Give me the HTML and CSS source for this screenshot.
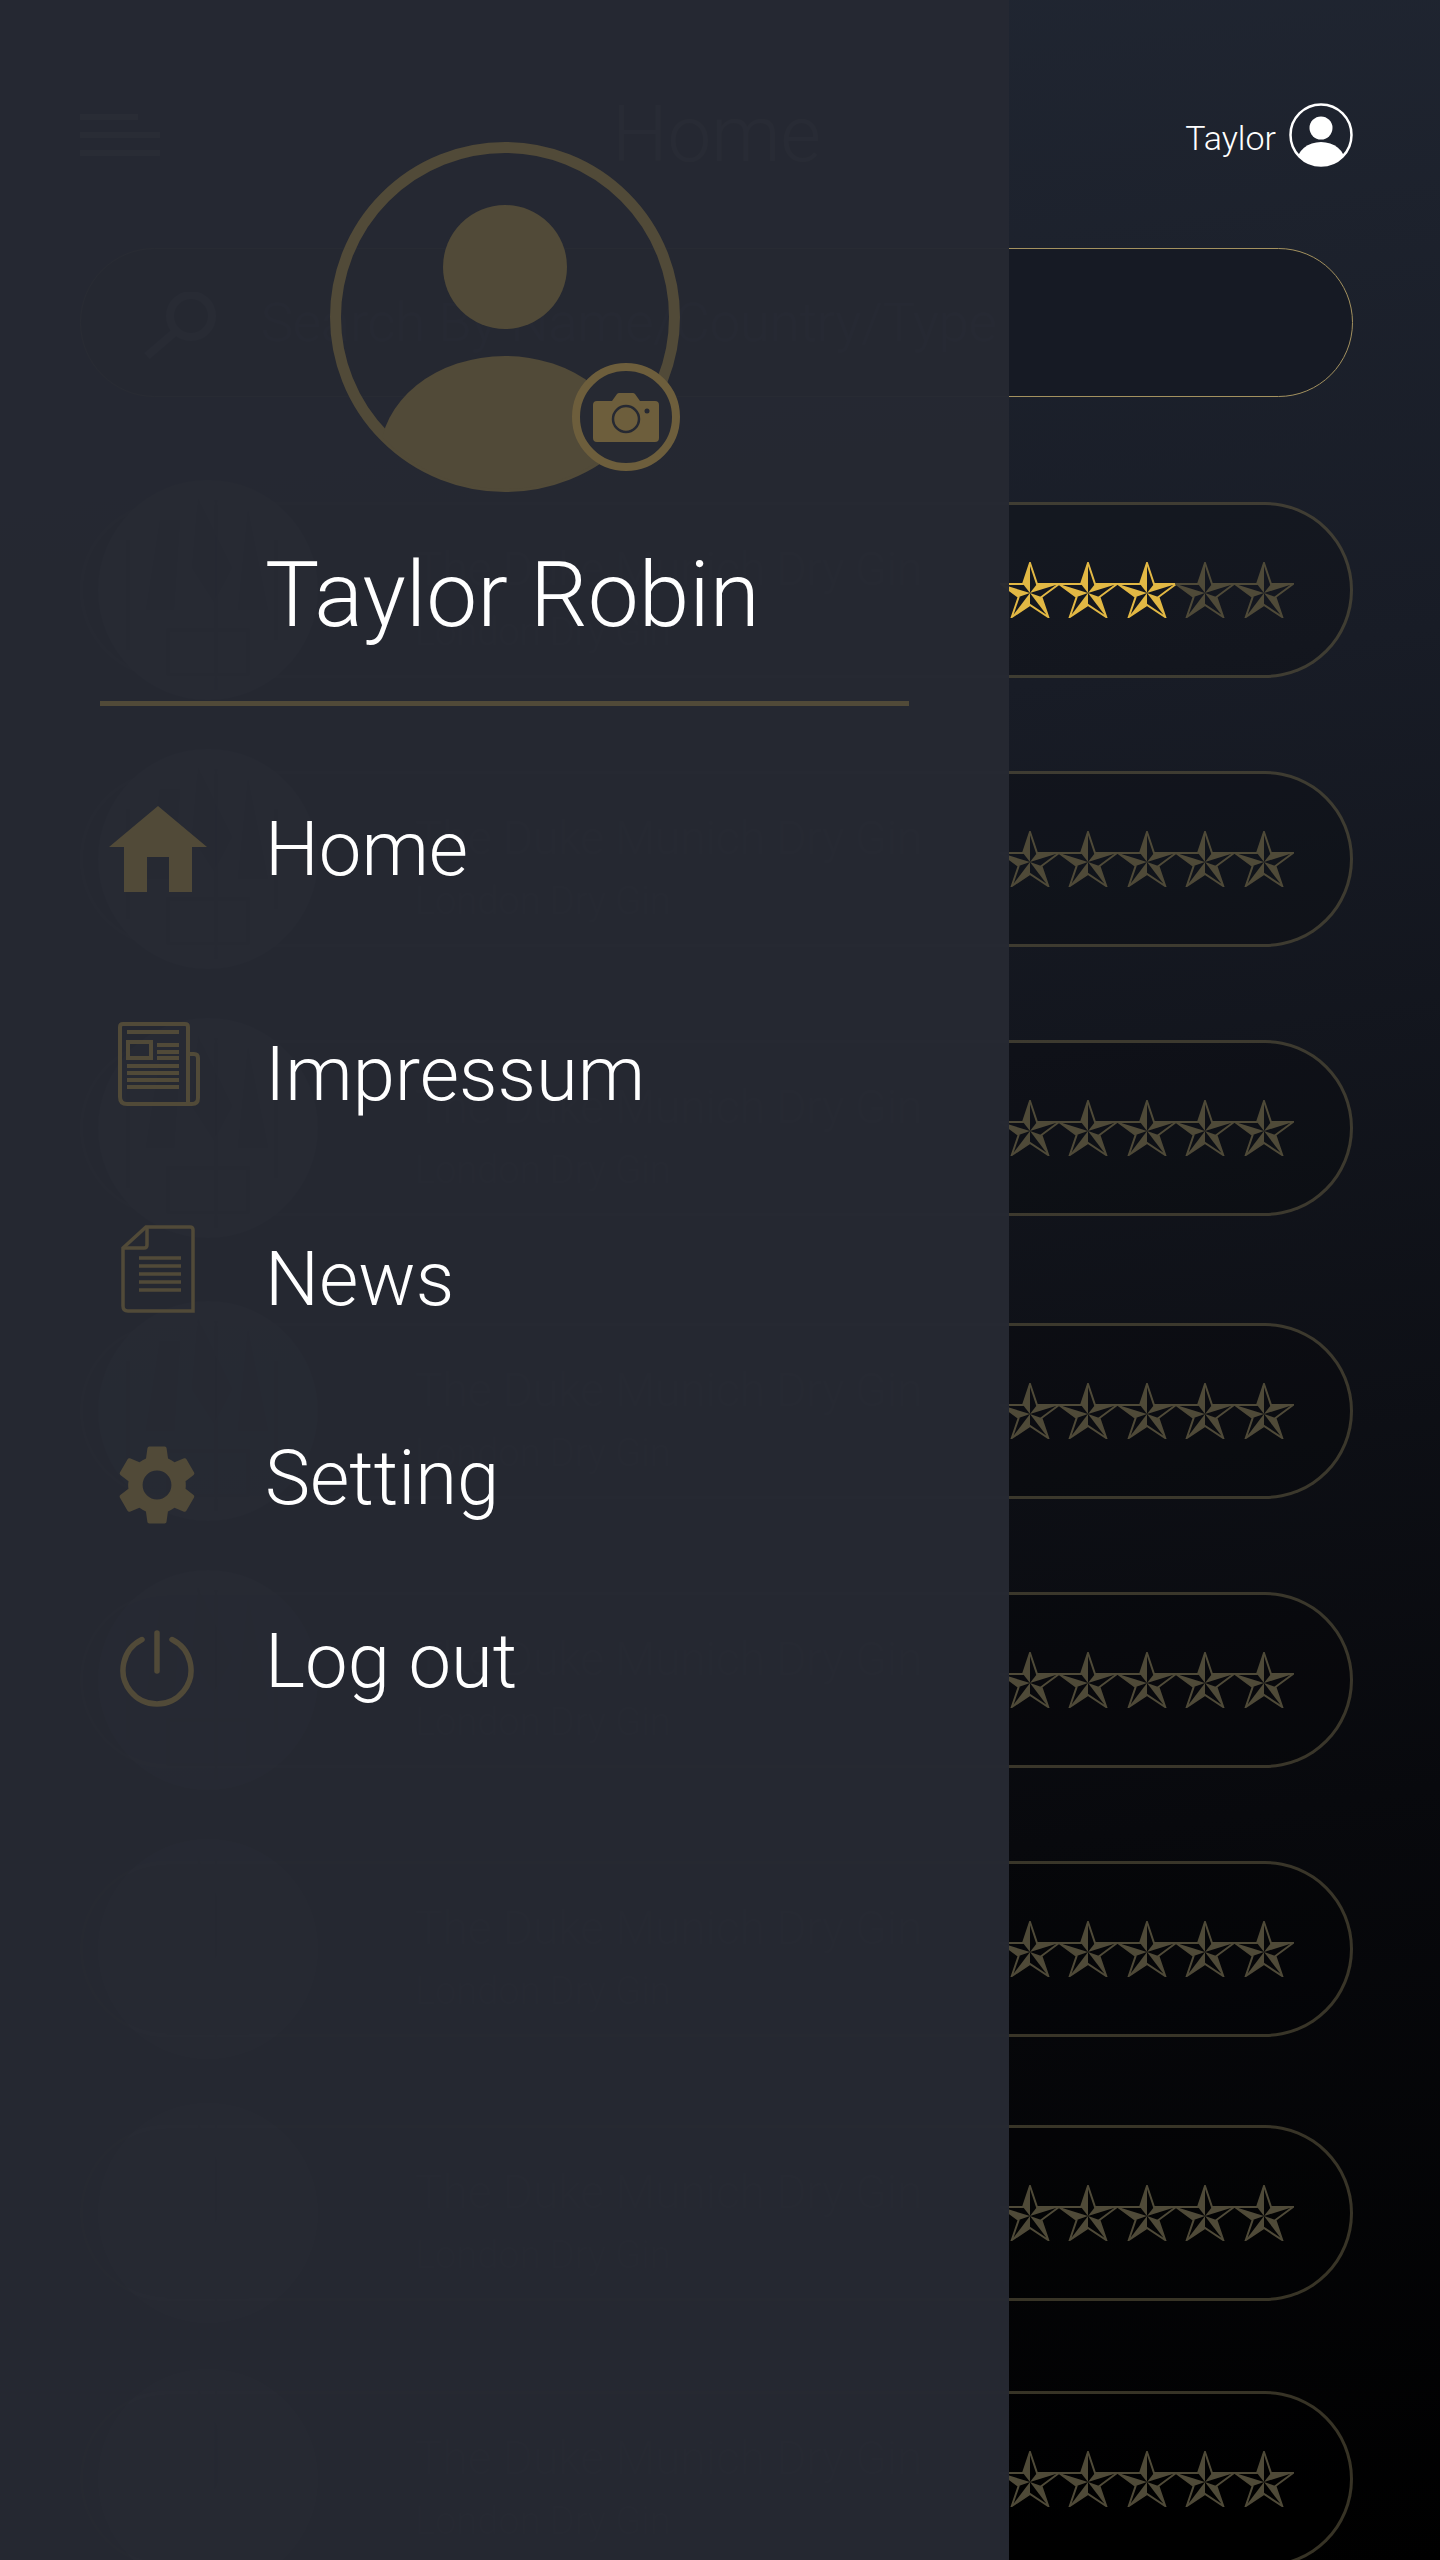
FILE: index.html
```html
<!DOCTYPE html>
<html lang="en">
<head>
    <meta charset="UTF-8">
    <title>Home</title>
    <link rel="stylesheet" href="styles.css">
</head>
<body>
<svg class="defs" width="0" height="0">
    <symbol id="star" viewBox="0 0 60 56">
        <polygon class="star_line" points="30,1 37,22 59,22 41.4,35 48.2,55 30,43 11.8,55 18.6,35 1,22 23,22"/>
        <polygon points="30,31 30,1 23,22"/>
        <polygon points="30,31 59,22 37,22"/>
        <polygon points="30,31 48.2,55 41.4,35"/>
        <polygon points="30,31 11.8,55 30,43"/>
        <polygon points="30,31 1,22 18.6,35"/>
    </symbol>
    <symbol id="portrait" viewBox="0 0 220 220">
        <circle cx="110" cy="110" r="110" fill="#fff" opacity=".3"/>
        <path d="M62 40h20l-6 90H48zM100 18l34 70-18 34-22-34zM150 30l20 100h-30z" fill="#000" opacity=".35"/>
        <path d="M30 60v110M118 20v190M178 60v100M70 150h80v45H70z" fill="none" stroke="#000" stroke-width="3" opacity=".3"/>
    </symbol>
</svg>

<div id="page">
    <div id="topbar">
        <div class="burger"><i class="short"></i><i></i><i></i></div>
        <h1>Home</h1>
        <div class="user">
            <span>Taylor</span>
            <svg class="user_icon" viewBox="0 0 64 64">
                <defs><clipPath id="userClip"><circle cx="32" cy="32" r="30.5"/></clipPath></defs>
                <circle cx="32" cy="32" r="30.5" fill="none" stroke="#fff" stroke-width="2.5"/>
                <circle cx="32" cy="25" r="11.5" fill="#fff"/>
                <ellipse cx="32" cy="59" rx="24" ry="20" fill="#fff" clip-path="url(#userClip)"/>
            </svg>
        </div>
    </div>

    <div class="search">
        <svg class="search_icon" viewBox="0 0 80 70"><circle cx="50" cy="24" r="21" fill="none" stroke="#fff" stroke-width="8"/><path d="M34 40 6 64" stroke="#fff" stroke-width="8"/></svg>
        <span>Search By Name/Country/Type</span>
    </div>

    <ul id="rows">
        <li class="row">
            <svg class="portrait"><use href="#portrait"/></svg>
            <div class="row_text"><b>The Duke Munich Dry Gin</b><em>London Dry Gin</em></div>
            <div class="stars">
                <svg class="star star_on"><use href="#star"/></svg>
                <svg class="star star_on"><use href="#star"/></svg>
                <svg class="star star_on"><use href="#star"/></svg>
                <svg class="star"><use href="#star"/></svg>
                <svg class="star"><use href="#star"/></svg>
            </div>
        </li>
        <li class="row">
            <svg class="portrait"><use href="#portrait"/></svg>
            <div class="row_text"><b>The Duke Munich Dry Gin</b><em>London Dry Gin</em></div>
            <div class="stars">
                <svg class="star"><use href="#star"/></svg>
                <svg class="star"><use href="#star"/></svg>
                <svg class="star"><use href="#star"/></svg>
                <svg class="star"><use href="#star"/></svg>
                <svg class="star"><use href="#star"/></svg>
            </div>
        </li>
        <li class="row">
            <svg class="portrait"><use href="#portrait"/></svg>
            <div class="row_text"><b>The Duke Munich Dry Gin</b><em>London Dry Gin</em></div>
            <div class="stars">
                <svg class="star"><use href="#star"/></svg>
                <svg class="star"><use href="#star"/></svg>
                <svg class="star"><use href="#star"/></svg>
                <svg class="star"><use href="#star"/></svg>
                <svg class="star"><use href="#star"/></svg>
            </div>
        </li>
        <li class="row">
            <svg class="portrait"><use href="#portrait"/></svg>
            <div class="row_text"><b>The Duke Munich Dry Gin</b><em>London Dry Gin</em></div>
            <div class="stars">
                <svg class="star"><use href="#star"/></svg>
                <svg class="star"><use href="#star"/></svg>
                <svg class="star"><use href="#star"/></svg>
                <svg class="star"><use href="#star"/></svg>
                <svg class="star"><use href="#star"/></svg>
            </div>
        </li>
        <li class="row">
            <svg class="portrait"><use href="#portrait"/></svg>
            <div class="row_text"><b>The Duke Munich Dry Gin</b><em>London Dry Gin</em></div>
            <div class="stars">
                <svg class="star"><use href="#star"/></svg>
                <svg class="star"><use href="#star"/></svg>
                <svg class="star"><use href="#star"/></svg>
                <svg class="star"><use href="#star"/></svg>
                <svg class="star"><use href="#star"/></svg>
            </div>
        </li>
        <li class="row">
            <svg class="portrait"><use href="#portrait"/></svg>
            <div class="row_text"><b>The Duke Munich Dry Gin</b><em>London Dry Gin</em></div>
            <div class="stars">
                <svg class="star"><use href="#star"/></svg>
                <svg class="star"><use href="#star"/></svg>
                <svg class="star"><use href="#star"/></svg>
                <svg class="star"><use href="#star"/></svg>
                <svg class="star"><use href="#star"/></svg>
            </div>
        </li>
        <li class="row">
            <svg class="portrait"><use href="#portrait"/></svg>
            <div class="row_text"><b>The Duke Munich Dry Gin</b><em>London Dry Gin</em></div>
            <div class="stars">
                <svg class="star"><use href="#star"/></svg>
                <svg class="star"><use href="#star"/></svg>
                <svg class="star"><use href="#star"/></svg>
                <svg class="star"><use href="#star"/></svg>
                <svg class="star"><use href="#star"/></svg>
            </div>
        </li>
        <li class="row">
            <svg class="portrait"><use href="#portrait"/></svg>
            <div class="row_text"><b>The Duke Munich Dry Gin</b><em>London Dry Gin</em></div>
            <div class="stars">
                <svg class="star"><use href="#star"/></svg>
                <svg class="star"><use href="#star"/></svg>
                <svg class="star"><use href="#star"/></svg>
                <svg class="star"><use href="#star"/></svg>
                <svg class="star"><use href="#star"/></svg>
            </div>
        </li>
    </ul>
</div>

<!-- side menu, open over the list -->
<div id="drawer">
    <div class="photo">
        <svg viewBox="0 0 350 350" width="350" height="350">
            <defs><clipPath id="photoClip"><circle cx="175" cy="175" r="172"/></clipPath></defs>
            <circle cx="175" cy="175" r="169.5" fill="none" stroke="#514a38" stroke-width="11"/>
            <circle cx="175" cy="125" r="62" fill="#514a38"/>
            <ellipse cx="175" cy="314" rx="125" ry="100" fill="#514a38" clip-path="url(#photoClip)"/>
        </svg>
        <svg class="camera" viewBox="0 0 108 108" width="108" height="108">
            <circle cx="54" cy="54" r="50" fill="#262932" stroke="#6d5e3c" stroke-width="8"/>
            <path d="M25 38h15l5-7q1-1 2-1h14q1 0 2 1l5 7h15q4 0 4 4v33q0 4-4 4H25q-4 0-4-4V42q0-4 4-4z" fill="#6d5e3c"/>
            <circle cx="54" cy="56" r="13" fill="none" stroke="#262932" stroke-width="2.5"/>
            <circle cx="75" cy="48" r="2.500" fill="#262932"/>
        </svg>
    </div>
    <div class="name">Taylor Robin</div>
    <div class="line"></div>
    <ul id="menu">
        <li class="m_home">
            <svg viewBox="0 0 98 86" width="98" height="86"><path d="M49 0 98 41H83V86H60V51H38V86H15V41H0z" fill="#514a38"/></svg>
            <span>Home</span>
        </li>
        <li class="m_imp">
            <svg viewBox="0 0 82 84" width="82" height="84" fill="none" stroke="#514a38" stroke-width="4">
                <path d="M70 32h6q4 0 4 4v40q0 6-6 6H9q-7 0-7-7V5q0-3 3-3h62q3 0 3 3v77"/>
                <path d="M9 10h52M39 23h22M39 30h22M39 36h22M9 44h52M9 51h52M9 58h52M9 65h52"/>
                <rect x="10" y="20" width="23" height="16"/>
            </svg>
            <span>Impressum</span>
        </li>
        <li class="m_news">
            <svg viewBox="0 0 74 88" width="74" height="88" fill="none" stroke="#514a38" stroke-width="3.500">
                <path d="M2 23 25 2h44q3 0 3 3v81H7q-5 0-5-5z"/>
                <path d="M2 23h21q3 0 3-3V2"/>
                <path d="M18 33h42M18 41h42M18 49h42M18 57h42M18 65h42"/>
            </svg>
            <span>News</span>
        </li>
        <li class="m_set">
            <svg viewBox="0 0 24 24" width="96" height="96"><path d="M19.14 12.94c.04-.3.06-.61.06-.94s-.02-.64-.07-.94l2.03-1.58a.49.49 0 0 0 .12-.61l-1.92-3.32a.49.49 0 0 0-.59-.22l-2.39.96a7 7 0 0 0-1.62-.94l-.36-2.54a.48.48 0 0 0-.48-.41H10.08a.48.48 0 0 0-.47.41l-.36 2.54c-.59.24-1.13.57-1.62.94l-2.39-.96a.48.48 0 0 0-.59.22L2.73 8.87a.48.48 0 0 0 .12.61l2.03 1.58c-.05.3-.09.63-.09.94s.02.64.07.94l-2.03 1.58a.49.49 0 0 0-.12.61l1.92 3.32c.12.22.37.29.59.22l2.39-.96c.5.38 1.03.7 1.62.94l.36 2.54c.05.24.24.41.48.41h3.84c.24 0 .44-.17.47-.41l.36-2.54c.59-.24 1.13-.56 1.62-.94l2.39.96c.22.08.47 0 .59-.22l1.92-3.32a.48.48 0 0 0-.12-.61l-2.01-1.58zM12 15.6a3.6 3.6 0 1 1 0-7.200 3.600 3.600 0 0 1 0 7.200z" fill="#514a38"/></svg>
            <span>Setting</span>
        </li>
        <li class="m_out">
            <svg viewBox="0 0 76 78" width="76" height="78" fill="none" stroke="#514a38" stroke-width="5.500" stroke-linecap="round"><path d="M23 9.500a34 34 0 1 0 30 0"/><path d="M38 3v38"/></svg>
            <span>Log out</span>
        </li>
    </ul>
</div>
</body>
</html>
```

FILE: styles.css
```css
* {
    margin: 0;
    padding: 0;
    box-sizing: border-box;
}

html, body {
    width: 1440px;
    height: 2560px;
    overflow: hidden;
}

body {
    position: relative;
    background: #000;
    font-family: Roboto, "Liberation Sans", sans-serif;
    font-weight: 300;
    color: #ffffff;
}

ul {
    list-style: none;
}

.defs {
    position: absolute;
}

#page {
    height: 2560px;
    overflow: hidden;
    padding: 103px 87px 0 80px;
    background: linear-gradient(172deg, #212733 0%, #181c26 30%, #08090d 72%, #000000 100%);
}

#topbar {
    height: 64px;
    display: grid;
    grid-template-columns: 1fr auto 1fr;
    grid-template-rows: 64px;
    align-items: center;
}

.burger {
    width: 80px;
    display: flex;
    flex-direction: column;
    gap: 12px;
    opacity: .7;
}

.burger i {
    display: block;
    height: 6px;
    background: #ffffff;
}

.burger .short {
    width: 58px;
}

#topbar h1 {
    font-size: 78px;
    line-height: 64px;
    font-weight: 300;
    opacity: .6;
}

.user {
    display: flex;
    align-items: center;
    justify-content: flex-end;
    gap: 13px;
    font-size: 34px;
}

.user span {
    margin-top: 6px;
}

.user_icon {
    width: 64px;
    height: 64px;
}

.search {
    height: 149px;
    margin-top: 81px;
    border: 1px solid #a3915f;
    border-radius: 75px;
    background: #161a24;
    display: flex;
    align-items: center;
    gap: 40px;
    padding-left: 60px;
    font-size: 54px;
}

.search span {
    opacity: .25;
}

.search_icon {
    width: 80px;
    height: 70px;
    margin-top: 8px;
    opacity: .5;
}

#rows {
    margin-top: 105px;
}

.row {
    height: 176px;
    margin-bottom: 93px;
    border: 3px solid rgba(100, 92, 68, .55);
    border-radius: 88px;
    background: rgba(0, 0, 0, .2);
    display: flex;
    align-items: center;
    padding: 0 58px 0 15px;
}

.row:nth-child(3) {
    margin-bottom: 107px;
}

.row:nth-child(6) {
    margin-bottom: 88px;
}

.row:nth-child(7) {
    margin-bottom: 90px;
}

.portrait {
    width: 220px;
    height: 220px;
    flex: none;
}

.row_text {
    margin: 16px 0 0 97px;
    display: flex;
    flex-direction: column;
    gap: 14px;
    opacity: .2;
}

.row_text b {
    font-size: 46px;
    font-weight: 300;
}

.row_text em {
    font-size: 38px;
    font-style: normal;
}

.stars {
    margin-left: auto;
    display: flex;
}

.star {
    width: 60px;
    height: 56px;
    margin-right: -1.5px;
    color: #4f4a38;
    fill: currentColor;
}

.star_on {
    color: #e2b844;
}

.star_line {
    fill: none;
    stroke: currentColor;
    stroke-width: 2;
}

#drawer {
    position: absolute;
    left: 0;
    top: 0;
    width: 1009px;
    height: 2560px;
    background: rgba(38, 41, 50, .98);
    padding: 142px 100px 0;
}

.photo {
    position: relative;
    width: 350px;
    height: 350px;
    margin-left: 230px;
}

.camera {
    position: absolute;
    right: 0;
    bottom: 21px;
}

.name {
    margin: 48px 0 0 165px;
    font-size: 91px;
    line-height: 110px;
}

.line {
    height: 5px;
    margin-top: 51px;
    background: #514a38;
}

#menu li {
    height: 90px;
    display: grid;
    grid-template-columns: 165px auto;
    align-items: start;
    font-size: 76px;
    line-height: 90px;
}

.m_home {
    margin-top: 98px;
}

.m_home svg {
    margin: 2px 0 0 9px;
}

.m_imp {
    margin-top: 135px;
}

.m_imp svg {
    margin: -7px 0 0 18px;
}

.m_news {
    margin-top: 115px;
}

.m_news svg {
    margin: -9px 0 0 21px;
}

.m_set {
    margin-top: 109px;
}

.m_set svg {
    margin: 4px 0 0 9px;
}

.m_out {
    margin-top: 93px;
}

.m_out svg {
    margin: 14px 0 0 19px;
}
```
